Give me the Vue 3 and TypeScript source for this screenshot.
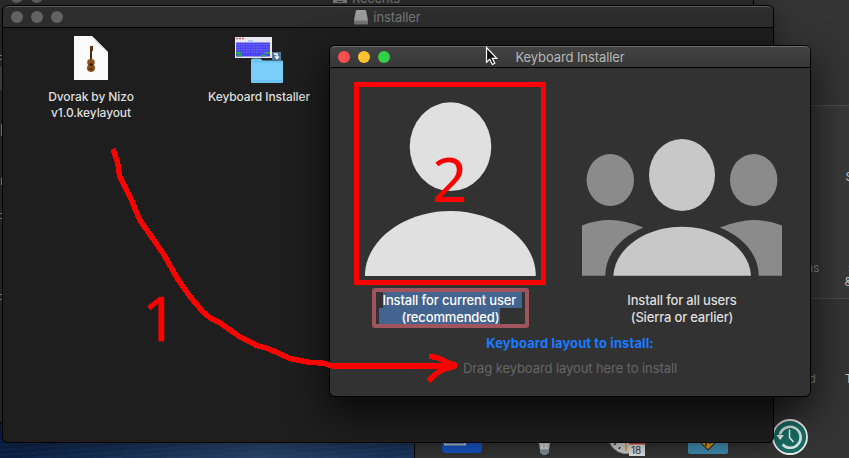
<script setup lang="ts">
interface FileItem {
  id: string
  lines: string[]
}

const files: FileItem[] = [
  { id: 'layout', lines: ['Dvorak by Nizo', 'v1.0.keylayout'] },
  { id: 'app', lines: ['Keyboard Installer'] },
]
const keyRows: number[] = [43.5, 46, 48.5, 51]
</script>

<template>
  <main class="desktop">
    <section class="prefs">
      <div class="pane top"></div>
      <div class="pane middle"></div>
      <div class="pane bottom"></div>
    </section>
    <section class="recents"></section>

    <svg class="scenery" viewBox="0 0 849 458">
      <circle cx="16.7" cy="-3" r="6" fill="#626262" />
      <circle cx="36.7" cy="-3" r="6" fill="#626262" />
      <path d="M333 0h14v3h-14z" fill="#7d7d7d" />
      <path d="M337 1.5h6" stroke="#333" />
      <text x="352" y="2.5" font-size="13" fill="#777" textLength="48">Recents</text>
      <g fill="#858585">
        <path d="M0 55h2v1H0zM0 59h2v1H0zM1 124h1v12H1zM1 178h1v7H1zM0 213h2v1H0zM0 218h2v1H0zM0 294h2v1H0zM0 299h2v1H0z" />
        <path d="M0 66h2v24H0z" fill="#454545" />
      </g>
      <g font-size="12" fill="#8b8b8b">
        <text x="806" y="272">ns</text>
        <text x="808.5" y="383">d</text>
        <text x="848" y="272">s</text>
      </g>
      <g font-size="12" fill="#c4c4c4">
        <text x="845.5" y="181">S</text>
        <text x="844.5" y="286">&amp;</text>
        <text x="845" y="383">T</text>
      </g>
      <rect x="442" y="425" width="40" height="28" rx="4" fill="#1555c4" />
      <path d="M445 442v2.500h20v-2.500" fill="none" stroke="#b9bcc4" stroke-width="2" />
      <path d="M538.5 440h12l-2 13q-4 3-8 0z" fill="#c4c4c4" />
      <path d="M540 449.500h9v2q-1 3-4.500 3.500q-3.500-.5-4.500-3.500z" fill="#7d8f99" />
      <path d="M542 440v9M546 440v9" stroke="#eee" />
      <circle cx="626" cy="436" r="17.500" fill="#d0d0d0" stroke="#999" />
      <path d="M614 445l2-2M619 449l1-2" stroke="#333" stroke-width="1.500" />
      <path d="M626 440v11" stroke="#e8972e" stroke-width="1.500" />
      <rect x="629" y="434" width="16" height="22" fill="#e3e3e3" />
      <rect x="629" y="434" width="16" height="10.500" fill="#c93b35" />
      <text x="631" y="454" font-size="10" fill="#333">18</text>
      <rect x="688" y="425" width="40" height="29" rx="2" fill="#408db2" />
      <path d="M701 443l7-7 7 7-7 7z" fill="#e59a19" stroke="#3b3423" stroke-width="1.200" />
      <path d="M706 442v4M710 441v3" stroke="#33270d" stroke-width="1.500" />
      <circle cx="790" cy="437" r="17" fill="#196e66" stroke="#efefef" stroke-width="1.800" />
      <path d="M780 434.500a10.500 10.500 0 1 1 2.500 10" fill="none" stroke="#dce9e7" stroke-width="2.600" />
      <path d="M776.500 435h7.500l-3.800 5z" fill="#eef4f3" />
      <path d="M789.500 429.500v8l4 4.500" fill="none" stroke="#eef4f3" stroke-width="1.500" />
    </svg>

    <section class="window finder">
      <header class="bar">
        <div class="lights"><i></i><i></i><i></i></div>
        <h1 class="title">
          <svg class="drive" width="14" height="16" viewBox="0 0 14 16">
            <path d="M3 1h8q1 0 1.200 1L14 11H0L1.800 2Q2 1 3 1z" fill="#9b9b9b" />
            <path d="M0 10.500h14V14q0 1.500-1.500 1.500h-11Q0 15.500 0 14z" fill="#727272" />
            <path d="M1 11h12" stroke="#aaa" />
          </svg>
          <span>installer</span>
        </h1>
      </header>
      <div class="files">
        <figure v-for="file in files" :key="file.id" class="file" :class="file.id">
          <svg v-if="file.id === 'layout'" width="50" height="50" viewBox="66 33 50 50">
            <path d="M74 36h18l16 16v28H74z" fill="#fbfbfb" />
            <path d="M92 36q5 4 3.500 11 7-1 12.500 5z" fill="#dedede" />
            <path d="M95.500 42v5h6z" fill="#f7f7f7" />
            <path d="M91 47v17" stroke="#4b250c" stroke-width="2" />
            <path d="M90 46h3v5h-3z" fill="#5d2f10" />
            <path d="M91 59c4 0 4.500 3 3 6 2 2 1 7-3 7s-5-4-3-7c-1.500-3-1-6 3-6z" fill="#8a4e16" />
            <circle cx="91.200" cy="64.500" r="1.500" fill="#301505" />
            <path d="M89 69h4" stroke="#3a1b08" />
          </svg>
          <svg v-else width="50" height="50" viewBox="234 33 50 50">
            <path d="M251 60q0-1.500 1.500-1.500h8l2 2H282q1 0 1 1V82q0 1-1 1h-30q-1 0-1-1z" fill="#6fc5f2" />
            <path d="M251 63h32v17h-32z" fill="#7bcffa" />
            <rect x="235" y="37" width="37" height="21" fill="#e9e9ef" />
            <path d="M236 38.500h9" stroke="#df6672" stroke-dasharray="2 1" stroke-width="1.500" />
            <path d="M248 41h5" stroke="#7bb2ef" />
            <rect x="236" y="42.500" width="34" height="14" fill="#4b43f4" />
            <path v-for="y in keyRows" :key="y" :d="`M236 ${y + 1}h34`" stroke="#928eff" stroke-width=".6" stroke-dasharray="1.500 1" />
            <path d="M236 53h5M237 55.500h5M265 53h5M261 55.500h5" stroke="#22ad43" stroke-width="2" />
            <rect x="272" y="52" width="9" height="8" fill="#52789b" />
            <path d="M274 54h3v3.500M275 56.500l2 2 2-2" fill="none" stroke="#fff" stroke-width="1.300" />
          </svg>
          <figcaption><span v-for="line in file.lines" :key="line">{{ line }}</span></figcaption>
        </figure>
      </div>
    </section>

    <section class="window dialog">
      <header class="bar">
        <div class="lights"><i></i><i></i><i></i></div>
        <h2 class="title"><span>Keyboard Installer</span></h2>
      </header>
      <div class="choices">
        <div class="choice current">
          <div class="frame">
            <svg width="182" height="192" viewBox="359 87 182 192">
              <ellipse cx="450.500" cy="146.700" rx="40.800" ry="44.400" />
              <path d="M365 276v-3C367 239 405 211 450.300 211S534 239 535.700 273v3z" />
            </svg>
          </div>
          <p class="caption picked">
            <span class="first">Install for current user</span>
            <span class="second">(recommended)</span>
          </p>
        </div>
        <div class="choice all">
          <svg width="200" height="138" viewBox="582 138 200 138">
            <g fill="#8b8b8b">
              <ellipse cx="610.300" cy="180" rx="23.700" ry="26" />
              <ellipse cx="753.700" cy="180" rx="23.700" ry="26" />
              <path d="M582 225.500Q595 220 610 220T643.500 227.500C621 237 605.500 254 605.300 275.700H582z" />
              <path d="M782 225.500Q769 220 754 220T720 227.500C743 237 758.500 254 758.700 275.700H782z" />
            </g>
            <g fill="#c8c8c8">
              <ellipse cx="682" cy="175" rx="33" ry="36" />
              <path d="M613.300 275.700C615 248 646 226.800 682 226.800S749.500 248 751 275.700z" />
            </g>
          </svg>
          <p class="caption plain">
            <span>Install for all users</span>
            <span>(Sierra or earlier)</span>
          </p>
        </div>
      </div>
      <p class="prompt">Keyboard layout to install:</p>
      <p class="drop">Drag keyboard layout here to install</p>
    </section>

    <svg class="notes" viewBox="0 0 849 458">
      <g fill="none" stroke="#f00" stroke-width="5.400" stroke-linejoin="bevel" shape-rendering="crispEdges">
        <path d="M113 149L117.500 162L119.500 176L131.500 200L139.500 219.500L163.500 254L177 278L190 296.500L203 312L209.500 317.500L221.500 324L240 337L256.500 345.500L268 348.500L290 358.500L310 362.500L322 363L333 366H456" />
        <path d="M429 356.500Q439 357 446 362L456.500 365.500L445 369Q435 373 428.500 381" />
      </g>
      <text x="142" y="341" stroke="#f00" stroke-width=".4">1</text>
      <text x="432" y="201.700">2</text>
      <path d="M486.500 47.500v14.700l3.300-3 2.500 5.300 2.500-1.200-2.500-5h4.500z" fill="#111" stroke="#fff" stroke-width="1.200" />
    </svg>
  </main>
</template>

<style>
body {
  margin: 0;
  background: #101d35;
}
</style>

<style scoped>
.desktop {
  position: relative;
  width: 849px;
  height: 458px;
  overflow: hidden;
  font-family: Inter, 'Liberation Sans', sans-serif;
  background: repeating-linear-gradient(176deg, transparent 0 3px, rgba(70, 110, 170, 0.08) 3px 5px),
    linear-gradient(90deg, #0a2044, #274368 260px, #193459 414px);
}
h1,
h2,
p,
figure {
  margin: 0;
}
.prefs {
  position: absolute;
  left: 414px;
  top: 0;
  width: 435px;
  height: 458px;
  border-left: 1px solid #050505;
  display: flex;
  flex-direction: column;
}
.pane {
  background: #343434;
}
.top {
  height: 105px;
}
.middle {
  height: 192px;
  background: #383838;
  border-top: 1px solid #4b4b4b;
  border-bottom: 1px solid #4b4b4b;
}
.bottom {
  flex: 1;
}
.recents {
  position: absolute;
  left: -10px;
  top: -10px;
  width: 762px;
  height: 431px;
  background: #2b2b2b;
  border: 1px solid #000;
  box-shadow: 0 4px 20px rgba(0, 0, 0, 0.25);
}
.scenery,
.notes {
  position: absolute;
  left: 0;
  top: 0;
  width: 849px;
  height: 458px;
}
.window {
  position: absolute;
  box-sizing: border-box;
  border: 1px solid #000;
  border-radius: 6px;
}
.finder {
  left: 2px;
  top: 5px;
  width: 772px;
  height: 438px;
  background: #1e1e1e;
  box-shadow: 0 4px 20px rgba(0, 0, 0, 0.35);
  overflow: hidden;
}
.dialog {
  left: 329px;
  top: 45px;
  width: 482px;
  height: 352px;
  background: #323232;
  box-shadow: 0 16px 38px 2px rgba(0, 0, 0, 0.68);
}
.bar {
  display: grid;
  grid-template-columns: 1fr auto 1fr;
  align-items: center;
  box-sizing: border-box;
  height: 22px;
  border-top: 1px solid #5b5b5b;
  border-bottom: 1px solid #000;
  border-radius: 5px 5px 0 0;
  background: #2d2d2d;
}
.dialog .bar {
  border-top-color: #6b6b6b;
  background: linear-gradient(#424242, #373737);
}
.lights {
  display: flex;
  gap: 8px;
  padding-left: 8px;
}
.lights i {
  width: 12px;
  height: 12px;
  border-radius: 50%;
  background: #626262;
}
.dialog .lights i:nth-child(1) {
  background: #ff4e50;
}
.dialog .lights i:nth-child(2) {
  background: #ffc12f;
}
.dialog .lights i:nth-child(3) {
  background: #33cf45;
}
.title {
  display: flex;
  align-items: center;
  gap: 5px;
  font-size: 13px;
  font-weight: 400;
  line-height: 20px;
  color: #757575;
}
.finder .title {
  letter-spacing: -0.08px;
  padding-right: 1px;
}
.dialog .title {
  color: #b8b8b8;
  letter-spacing: -0.09px;
}
.files {
  display: flex;
  padding: 5px 0 0 18px;
}
.file {
  width: 140px;
  display: flex;
  flex-direction: column;
  align-items: center;
}
.file.app {
  margin-left: 28px;
}
figcaption {
  display: flex;
  flex-direction: column;
  align-items: center;
  margin-top: 6px;
  font-size: 12px;
  line-height: 16px;
  font-weight: 500;
  letter-spacing: -0.1px;
  color: #dedede;
  white-space: nowrap;
}
.choices {
  display: flex;
}
.choice {
  display: flex;
  flex-direction: column;
  align-items: center;
}
.current {
  margin-left: 24px;
  padding-top: 14px;
  width: 192px;
}
.frame {
  border: 5px solid #f00;
  width: 182px;
  height: 193px;
  fill: #e0e0e0;
}
.all {
  margin-left: 36px;
  padding-top: 70px;
}
svg {
  display: block;
}
.caption {
  display: flex;
  flex-direction: column;
  align-items: center;
  margin-top: 16px;
  font-size: 13px;
  line-height: 17px;
  font-weight: 500;
  letter-spacing: -0.15px;
  color: #dedede;
  white-space: nowrap;
}
.plain {
  letter-spacing: -0.18px;
}
.picked {
  box-sizing: border-box;
  width: 157px;
  height: 40px;
  margin-top: 3px;
  border: 4px solid #a0555e;
  border-radius: 3px;
  align-items: flex-start;
  line-height: 16px;
  color: #fff;
}
.picked span {
  background: #43648e;
  box-sizing: border-box;
  height: 16px;
}
.first {
  margin-left: 7px;
  width: 139px;
}
.picked .second {
  margin-left: 3px;
  width: 121px;
  padding-left: 23px;
  line-height: 18px;
}
.prompt,
.drop {
  text-align: center;
  font-size: 13px;
  line-height: 18px;
}
.prompt {
  margin-top: 6px;
  color: #197bff;
  font-weight: 700;
  letter-spacing: 0.09px;
}
.drop {
  margin-top: 7px;
  color: #666;
  letter-spacing: -0.09px;
}
.notes text {
  font-family: 'Noto Sans', sans-serif;
  font-size: 62px;
  fill: #f00;
}
</style>
